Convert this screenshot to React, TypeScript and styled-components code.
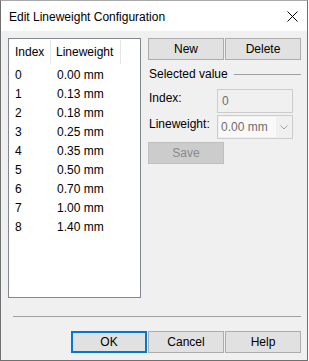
import React from "react";
import styled, { createGlobalStyle } from "styled-components";

const Global = createGlobalStyle`
  html, body { margin: 0; padding: 0; background: #ffffff; }
  body { font-family: "Liberation Sans", Arial, sans-serif; font-size: 12px; color: #000; }
  * { box-sizing: border-box; }
`;

const Window = styled.div`
  width: 308px;
  height: 361px;
  display: flex;
  flex-direction: column;
  border: 1px solid #707070;
  border-top-color: #a8a8a8;
  background: #f0f0f0;
`;

const TitleBar = styled.div`
  height: 30px;
  flex: none;
  background: #ffffff;
  display: flex;
  align-items: center;
  justify-content: space-between;
  padding: 1px 9px 0 8px;
`;

const Title = styled.div`
  font-size: 12px;
  color: #000;
`;

const Body = styled.div`
  flex: 1;
  display: flex;
  flex-direction: column;
  padding: 7px 6px 0 7px;
`;

const Main = styled.div`
  display: flex;
  gap: 7px;
`;

const ListView = styled.div`
  width: 133px;
  height: 260px;
  flex: none;
  border: 1px solid #828790;
  background: #ffffff;
`;

const HeaderRow = styled.div`
  display: flex;
  height: 25px;
  align-items: stretch;
`;

const HeaderCell = styled.div<{ $w: number; $pad: number }>`
  width: ${(p) => p.$w}px;
  padding-left: ${(p) => p.$pad}px;
  display: flex;
  align-items: center;
  border-right: 1px solid #e5e5e5;
  margin: 1px 0 0 0;
`;

const Rows = styled.div`
  padding-top: 1px;
`;

const Row = styled.div`
  display: flex;
  height: 19px;
  align-items: center;
`;

const Cell = styled.div<{ $w: number; $pad: number }>`
  width: ${(p) => p.$w}px;
  padding-left: ${(p) => p.$pad}px;
  white-space: nowrap;
`;

const RightPanel = styled.div`
  width: 153px;
  display: flex;
  flex-direction: column;
`;

const ButtonRow = styled.div`
  display: flex;
  gap: 1px;
`;

const Button = styled.button<{ $default?: boolean; $disabled?: boolean }>`
  width: 76px;
  height: 22px;
  font-family: inherit;
  font-size: 12px;
  padding: 0;
  color: ${(p) => (p.$disabled ? "#8a8a8a" : "#000")};
  background: ${(p) => (p.$disabled ? "#cccccc" : "#e1e1e1")};
  border: ${(p) =>
    p.$default ? "2px solid #0078d7" : p.$disabled ? "1px solid #bfbfbf" : "1px solid #adadad"};
`;

const GroupHeader = styled.div`
  display: flex;
  align-items: center;
  gap: 6px;
  margin-top: 6px;
  height: 16px;
  padding-left: 1px;
`;

const GroupLine = styled.div`
  flex: 1;
  height: 1px;
  background: #a0a0a0;
  margin-top: 1px;
`;

const FieldRow = styled.div<{ $mt: number }>`
  display: flex;
  align-items: center;
  margin-top: ${(p) => p.$mt}px;
`;

const Label = styled.div`
  width: 69px;
  padding-left: 1px;
  margin-top: -7px;
`;

const TextField = styled.div`
  width: 76px;
  height: 24px;
  border: 1px solid #cccccc;
  background: #f0f0f0;
  color: #6d6d6d;
  display: flex;
  align-items: center;
  padding-left: 4px;
`;

const Combo = styled.div`
  width: 76px;
  height: 24px;
  border: 1px solid #cccccc;
  background: #f0f0f0;
  display: flex;
  align-items: stretch;
`;

const ComboText = styled.div`
  width: 57px;
  margin: 1px 0 1px 1px;
  background: #f9f9f9;
  color: #6d6d6d;
  display: flex;
  align-items: center;
  padding-left: 2px;
  white-space: nowrap;
`;

const ComboArrow = styled.div`
  flex: 1;
  display: flex;
  align-items: center;
  justify-content: center;
`;

const SaveWrap = styled.div`
  margin-top: 3px;
`;

const Separator = styled.div`
  height: 1px;
  background: #a0a0a0;
  margin: 18px 0 0 5px;
`;

const Footer = styled.div`
  display: flex;
  justify-content: flex-end;
  gap: 1px;
  margin-top: 14px;
`;

const rows: [string, string][] = [
  ["0", "0.00 mm"],
  ["1", "0.13 mm"],
  ["2", "0.18 mm"],
  ["3", "0.25 mm"],
  ["4", "0.35 mm"],
  ["5", "0.50 mm"],
  ["6", "0.70 mm"],
  ["7", "1.00 mm"],
  ["8", "1.40 mm"],
];

export default function App() {
  return (
    <>
      <Global />
      <Window>
        <TitleBar>
          <Title>Edit Lineweight Configuration</Title>
          <svg width="11" height="11" viewBox="0 0 11 11">
            <path d="M0.5 0.5 L10.5 10.5 M10.5 0.5 L0.5 10.5" stroke="#000" strokeWidth="1" />
          </svg>
        </TitleBar>
        <Body>
          <Main>
            <ListView>
              <HeaderRow>
                <HeaderCell $w={42} $pad={6}>Index</HeaderCell>
                <HeaderCell $w={70} $pad={5}>Lineweight</HeaderCell>
              </HeaderRow>
              <Rows>
                {rows.map(([i, v]) => (
                  <Row key={i}>
                    <Cell $w={42} $pad={6}>{i}</Cell>
                    <Cell $w={70} $pad={6}>{v}</Cell>
                  </Row>
                ))}
              </Rows>
            </ListView>
            <RightPanel>
              <ButtonRow>
                <Button>New</Button>
                <Button>Delete</Button>
              </ButtonRow>
              <GroupHeader>
                <span>Selected value</span>
                <GroupLine />
              </GroupHeader>
              <FieldRow $mt={7}>
                <Label>Index:</Label>
                <TextField>0</TextField>
              </FieldRow>
              <FieldRow $mt={2}>
                <Label>Lineweight:</Label>
                <Combo>
                  <ComboText>0.00 mm</ComboText>
                  <ComboArrow>
                    <svg width="8" height="5" viewBox="0 0 8 5">
                      <path d="M0.5 0.5 L4 4 L7.5 0.5" fill="none" stroke="#a0a0a0" strokeWidth="1" />
                    </svg>
                  </ComboArrow>
                </Combo>
              </FieldRow>
              <SaveWrap>
                <Button $disabled>Save</Button>
              </SaveWrap>
            </RightPanel>
          </Main>
          <Separator />
          <Footer>
            <Button $default>OK</Button>
            <Button>Cancel</Button>
            <Button>Help</Button>
          </Footer>
        </Body>
      </Window>
    </>
  );
}
